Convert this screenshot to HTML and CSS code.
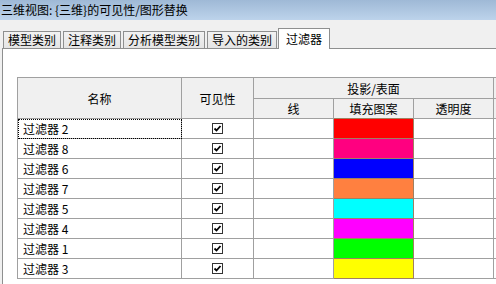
FILE: index.html
```html
<!DOCTYPE html>
<html lang="zh">

<head>
    <meta charset="UTF-8">
    <title>可见性/图形替换</title>
    <link rel="stylesheet" href="styles.css">
</head>

<body>
    <div id="dialog">
        <div class="titlebar">三维视图: {三维}的可见性/图形替换</div>
        <div class="tabs">
            <div class="tab">模型类别</div>
            <div class="tab">注释类别</div>
            <div class="tab">分析模型类别</div>
            <div class="tab">导入的类别</div>
            <div class="tab active">过滤器</div>
        </div>
        <div class="panel">
            <table class="grid">
                <colgroup>
                    <col class="c-name">
                    <col class="c-vis">
                    <col class="c-std">
                    <col class="c-std">
                    <col class="c-std">
                    <col class="c-std">
                </colgroup>
                <thead>
                    <tr class="head1">
                        <th rowspan="2">名称</th>
                        <th rowspan="2">可见性</th>
                        <th colspan="3">投影/表面</th>
                        <th></th>
                    </tr>
                    <tr class="head2">
                        <th>线</th>
                        <th>填充图案</th>
                        <th>透明度</th>
                        <th></th>
                    </tr>
                </thead>
                <tbody id="rows"></tbody>
            </table>
        </div>
    </div>

    <script>
        const filters = [
            ['过滤器 2', '#ff0000'],
            ['过滤器 8', '#ff0080'],
            ['过滤器 6', '#0000ff'],
            ['过滤器 7', '#ff8040'],
            ['过滤器 5', '#00ffff'],
            ['过滤器 4', '#ff00ff'],
            ['过滤器 1', '#00ff00'],
            ['过滤器 3', '#ffff00']
        ];

        const check = '<svg class="check" width="11" height="11" viewBox="0 0 11 11">' +
            '<rect x="0.5" y="0.5" width="10" height="10" fill="#fff" stroke="#333"/>' +
            '<path d="M2.5 5.5 L4.5 7.5 L8.5 3" fill="none" stroke="#000" stroke-width="1.8"/></svg>';

        const rows = document.getElementById('rows');
        filters.forEach(function (f, i) {
            rows.innerHTML += `<tr>
                <td class="name${i === 0 ? ' focus' : ''}">${f[0]}</td>
                <td class="vis">${check}</td>
                <td></td>
                <td class="fill" style="background-color: ${f[1]}"></td>
                <td></td>
                <td></td>
            </tr>`;
        });
    </script>
</body>

</html>
```

FILE: styles.css
```css
body {
    margin: 0;
    padding: 0;
    width: 496px;
    height: 284px;
    overflow: hidden;
    font-family: "Noto Sans CJK SC", "Liberation Sans", sans-serif;
    font-size: 12px;
    color: #000;
}

#dialog {
    background-color: #f0f0f0;
    height: 284px;
    display: flex;
    flex-direction: column;
}

.titlebar {
    height: 20px;
    line-height: 19px;
    padding-left: 1px;
    background: linear-gradient(#9fb9d6, #bdd3eb);
}

.tabs {
    display: flex;
    align-items: flex-end;
    gap: 2px;
    height: 28px;
    padding-left: 3px;
    box-sizing: border-box;
}

.tab {
    height: 17px;
    line-height: 16px;
    padding: 0 4px;
    border: 1px solid #8e8f8f;
    border-bottom: none;
    background: linear-gradient(#f2f2f2, #e4e4e4);
    box-sizing: border-box;
    margin-bottom: 0;
}

.tab.active {
    height: 21px;
    line-height: 20px;
    padding: 0 7px;
    background: #fff;
    margin-bottom: -1px;
    margin-left: -1px;
    position: relative;
    z-index: 1;
}

.panel {
    flex: 1;
    margin-left: 2px;
    background: #fff;
    border-top: 1px solid #8e8f8f;
    border-left: 1px solid #8e8f8f;
    padding: 28px 0 0 14px;
    overflow: hidden;
}

.grid {
    border-collapse: collapse;
    table-layout: fixed;
    width: 556px;
}

.c-name {
    width: 164px;
}

.c-vis {
    width: 72px;
}

.c-std {
    width: 80px;
}

.grid th,
.grid td {
    border: 1px solid #a0a0a0;
    padding: 0;
    font-weight: normal;
}

.grid th {
    background-color: #f0f0f0;
    text-align: center;
}

.head1 th {
    height: 20px;
}

.head2 th {
    height: 19px;
    border-bottom: 1px dotted #000;
}

.grid thead tr:first-child th[rowspan] {
    border-bottom: 1px dotted #000;
}

.grid td {
    height: 19px;
}

.grid td.name {
    padding-left: 5px;
    white-space: nowrap;
}

.grid td.focus {
    outline: 1px dotted #000;
    outline-offset: -1px;
}

.grid td.vis {
    text-align: center;
    line-height: 0;
}

.check {
    display: inline-block;
    vertical-align: middle;
}

.grid td.fill {
    border-color: #a08060;
}
```
